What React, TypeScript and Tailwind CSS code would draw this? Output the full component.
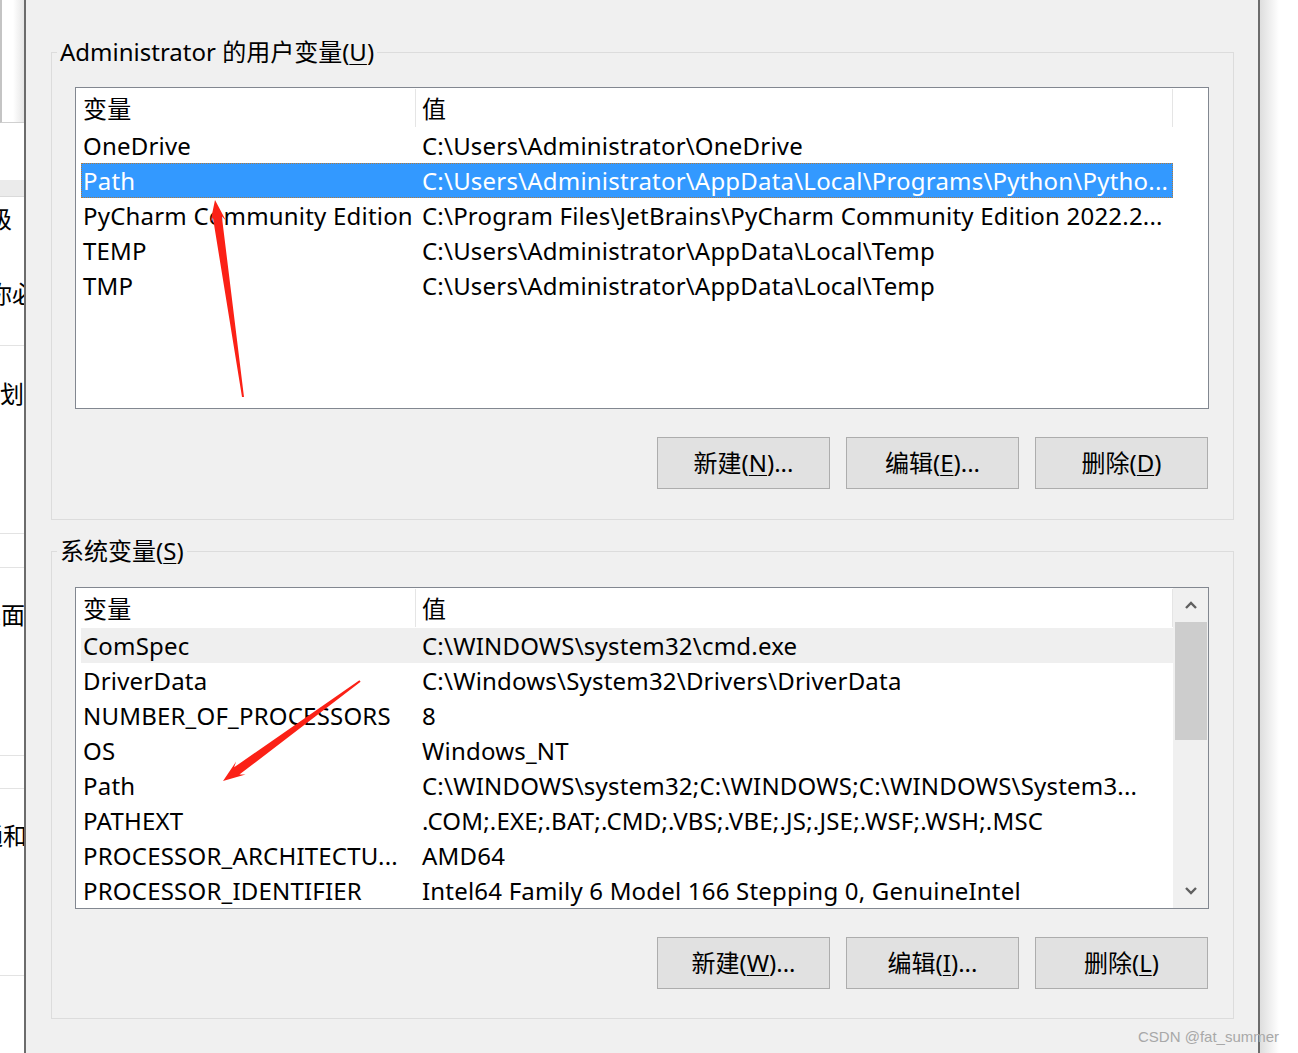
import React from "react";

type Row = { name: string; value: string; state?: "selected" | "hover" };

const USER_VARS: Row[] = [
  { name: "OneDrive", value: "C:\\Users\\Administrator\\OneDrive" },
  { name: "Path", value: "C:\\Users\\Administrator\\AppData\\Local\\Programs\\Python\\Pytho...", state: "selected" },
  { name: "PyCharm Community Edition", value: "C:\\Program Files\\JetBrains\\PyCharm Community Edition 2022.2..." },
  { name: "TEMP", value: "C:\\Users\\Administrator\\AppData\\Local\\Temp" },
  { name: "TMP", value: "C:\\Users\\Administrator\\AppData\\Local\\Temp" },
];

const SYSTEM_VARS: Row[] = [
  { name: "ComSpec", value: "C:\\WINDOWS\\system32\\cmd.exe", state: "hover" },
  { name: "DriverData", value: "C:\\Windows\\System32\\Drivers\\DriverData" },
  { name: "NUMBER_OF_PROCESSORS", value: "8" },
  { name: "OS", value: "Windows_NT" },
  { name: "Path", value: "C:\\WINDOWS\\system32;C:\\WINDOWS;C:\\WINDOWS\\System3..." },
  { name: "PATHEXT", value: ".COM;.EXE;.BAT;.CMD;.VBS;.VBE;.JS;.JSE;.WSF;.WSH;.MSC" },
  { name: "PROCESSOR_ARCHITECTU...", value: "AMD64" },
  { name: "PROCESSOR_IDENTIFIER", value: "Intel64 Family 6 Model 166 Stepping 0, GenuineIntel" },
];

// tapered red arrow, like the ones drawn by a screenshot tool
function arrowPoints(sx: number, sy: number, tx: number, ty: number) {
  const headLen = 22;
  const headW = 8;
  const shaftW = 4.5;
  const tailW = 1;
  const dx = tx - sx;
  const dy = ty - sy;
  const len = Math.hypot(dx, dy);
  const ux = dx / len;
  const uy = dy / len;
  const nx = -uy;
  const ny = ux;
  const bx = tx - ux * (headLen - 5);
  const by = ty - uy * (headLen - 5);
  const wx = tx - ux * headLen;
  const wy = ty - uy * headLen;
  const pts = [
    [sx + nx * tailW, sy + ny * tailW],
    [bx + nx * shaftW, by + ny * shaftW],
    [wx + nx * headW, wy + ny * headW],
    [tx, ty],
    [wx - nx * headW, wy - ny * headW],
    [bx - nx * shaftW, by - ny * shaftW],
    [sx - nx * tailW, sy - ny * tailW],
  ];
  return pts.map((p) => `${p[0].toFixed(1)},${p[1].toFixed(1)}`).join(" ");
}

function Mn({ children }: { children: React.ReactNode }) {
  return <span className="underline underline-offset-[3px] decoration-1">{children}</span>;
}

function Button({ label, k, dots }: { label: string; k: string; dots?: boolean }) {
  return (
    <div className="w-[173px] h-[52px] flex items-center justify-center bg-[#e1e1e1] border border-[#adadad] text-[24px] text-black">
      {label}(<Mn>{k}</Mn>){dots ? "..." : ""}
    </div>
  );
}

function Chevron({ up }: { up?: boolean }) {
  return (
    <svg width="14" height="10" viewBox="0 0 14 10">
      <polyline
        points={up ? "2,8 7,3 12,8" : "2,2 7,7 12,2"}
        fill="none"
        stroke="#606060"
        strokeWidth="2.4"
      />
    </svg>
  );
}

function VarList({ rows, scroll }: { rows: Row[]; scroll?: boolean }) {
  return (
    <div className="h-[322px] w-[1134px] border border-[#828790] bg-white flex text-[24px] leading-[35px] tracking-[0.2px]">
      <div className="w-[1097px] flex flex-col">
        <div className="h-[40px] flex pl-[5px] text-black">
          <div className="w-[335px] h-[38px] flex items-center pl-[2px] border-r border-[#e5e5e5] my-px">变量</div>
          <div className="flex-1 h-[38px] flex items-center pl-[6px] border-r border-[#e5e5e5] my-px">值</div>
        </div>
        {rows.map((r) => {
          const sel = r.state === "selected";
          const hov = r.state === "hover";
          return (
            <div
              key={r.name}
              className={
                "ml-[5px] h-[35px] shrink-0 flex items-center whitespace-nowrap overflow-hidden " +
                (sel
                  ? "bg-[#3399ff] text-white outline-1 outline-dotted outline-[#b0793c] -outline-offset-1"
                  : hov
                  ? "bg-[#efefef] text-black"
                  : "text-black")
              }
            >
              <div className="w-[335px] shrink-0 pl-[2px] overflow-hidden">{r.name}</div>
              <div className="pl-[6px] overflow-hidden">{r.value}</div>
            </div>
          );
        })}
      </div>
      {scroll ? (
        <div className="flex-1 bg-[#f0f0f0] flex flex-col items-center">
          <div className="h-[34px] w-full flex items-center justify-center">
            <Chevron up />
          </div>
          <div className="h-[118px] w-[32px] bg-[#cdcdcd]" />
          <div className="flex-1" />
          <div className="h-[34px] w-full flex items-center justify-center">
            <Chevron />
          </div>
        </div>
      ) : (
        <div className="flex-1" />
      )}
    </div>
  );
}

function Group({
  legend,
  rows,
  scroll,
  buttons,
  className,
}: {
  legend: React.ReactNode;
  rows: Row[];
  scroll?: boolean;
  buttons: React.ReactNode;
  className: string;
}) {
  return (
    <fieldset className={"border border-[#dcdcdc] pl-[23px] pr-[24px] " + className}>
      <legend className="ml-[-18px] px-[3px] leading-[34px] text-[24px] text-black">{legend}</legend>
      <VarList rows={rows} scroll={scroll} />
      <div className="mt-[28px] flex justify-end gap-[16px] pr-[1px]">{buttons}</div>
    </fieldset>
  );
}

function Fragment({ text, pt, pr }: { text: string; pt: string; pr: string }) {
  return (
    <div className={"h-[35px] flex items-center justify-end overflow-hidden whitespace-nowrap text-[24px] text-black " + pt}>
      <span className={pr}>{text}</span>
    </div>
  );
}

export default function App() {
  return (
    <div className="relative w-[1298px] h-[1053px] flex overflow-hidden bg-white font-['Noto_Sans','Noto_Sans_CJK_SC',sans-serif]">
      {/* window behind the dialog */}
      <div className="w-[24px] shrink-0 flex flex-col bg-white">
        <div className="h-[123px] shrink-0 border-l-2 border-l-[#c4c4c4] border-b border-b-[#d0d0d0] bg-linear-to-r from-white via-white to-[#e6e6e6]" />
        <div className="h-[57px] shrink-0" />
        <div className="h-[17px] shrink-0 bg-[#ebebeb] border-b border-[#dadada]" />
        <div className="h-[149px] shrink-0 border-b border-[#e3e3e3] overflow-hidden">
          <Fragment text="级" pt="mt-[4px]" pr="mr-[12px]" />
          <Fragment text="你必" pt="mt-[40px]" pr="mr-[-12px]" />
        </div>
        <div className="h-[188px] shrink-0 border-b border-[#e3e3e3] overflow-hidden">
          <Fragment text="计划" pt="mt-[30px]" pr="mr-[0px]" />
        </div>
        <div className="h-[34px] shrink-0 border-b border-[#e3e3e3]" />
        <div className="h-[188px] shrink-0 border-b border-[#e3e3e3] overflow-hidden">
          <Fragment text="桌面" pt="mt-[29px]" pr="mr-[-1px]" />
        </div>
        <div className="h-[33px] shrink-0 border-b border-[#e3e3e3]" />
        <div className="h-[187px] shrink-0 border-b border-[#e3e3e3] overflow-hidden">
          <Fragment text="通和" pt="mt-[29px]" pr="mr-[-3px]" />
        </div>
        <div className="flex-1" />
      </div>

      {/* dialog */}
      <div className="w-[1236px] shrink-0 bg-[#f0f0f0] border-x-2 border-[#6c6c6c] pl-[25px] pr-[24px] pt-[35px] flex flex-col">
        <Group
          className="pt-[18px] pb-[30px]"
          legend={
            <>
              Administrator 的用户变量(<Mn>U</Mn>)
            </>
          }
          rows={USER_VARS}
          buttons={
            <>
              <Button label="新建" k="N" dots />
              <Button label="编辑" k="E" dots />
              <Button label="删除" k="D" />
            </>
          }
        />
        <Group
          className="mt-[14px] pt-[19px] pb-[29px]"
          legend={
            <>
              系统变量(<Mn>S</Mn>)
            </>
          }
          rows={SYSTEM_VARS}
          scroll
          buttons={
            <>
              <Button label="新建" k="W" dots />
              <Button label="编辑" k="I" dots />
              <Button label="删除" k="L" />
            </>
          }
        />
      </div>

      {/* desktop right of the dialog */}
      <div className="flex-1 bg-linear-to-r from-[#dedede] to-white to-50%" />

      {/* annotations */}
      <svg className="absolute inset-0 pointer-events-none" width="1298" height="1053">
        <polygon points={arrowPoints(243, 397, 215, 200)} fill="#fb2116" />
        <polygon points={arrowPoints(360, 681, 223, 781)} fill="#fb2116" />
      </svg>
      <div className="absolute left-[1138px] top-[1027px] text-[15px] leading-[20px] text-[#a8a8a8] font-['Liberation_Sans',Arial,sans-serif]">
        CSDN @fat_summer
      </div>
    </div>
  );
}
